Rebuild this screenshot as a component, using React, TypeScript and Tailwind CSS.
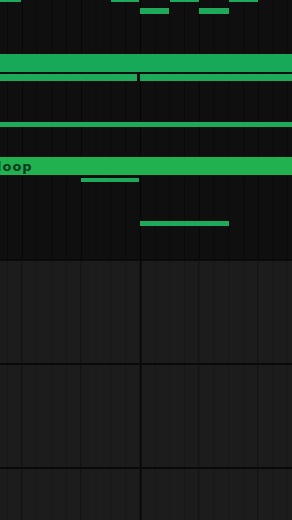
const notes = [
    { x: 0, y: 0, w: 21, h: 2 },
    { x: 111, y: 0, w: 28, h: 2 },
    { x: 170, y: 0, w: 29, h: 2 },
    { x: 229, y: 0, w: 29, h: 2 },
    { x: 140, y: 8, w: 29, h: 6 },
    { x: 199, y: 8, w: 30, h: 6 },
    { x: 0, y: 74, w: 137, h: 7 },
    { x: 140, y: 74, w: 152, h: 7 },
    { x: 81, y: 178, w: 58, h: 4 },
    { x: 140, y: 221, w: 89, h: 5 },
];

const grid =
    "[background-image:linear-gradient(90deg,#050505_1px,transparent_1px),linear-gradient(90deg,#080808_1px,transparent_1px),linear-gradient(90deg,#0a0a0a_1px,transparent_1px)] [background-size:236px_100%,59px_100%,14.75px_100%] [background-position:140px_0,22px_0,7px_0]";

const gridDark =
    "[background-image:linear-gradient(90deg,#0c0c0c_2px,transparent_2px),linear-gradient(90deg,#141414_1px,transparent_1px),linear-gradient(90deg,#181818_1px,transparent_1px)] [background-size:236px_100%,59px_100%,14.75px_100%] [background-position:140px_0,21px_0,7px_0]";

export default function App() {
    return (
        <div className="w-[292px] h-[520px] overflow-hidden bg-[#1c1c1c] flex flex-col font-['DejaVu_Sans',sans-serif]">
            <div className={`relative h-[259px] shrink-0 bg-[#0f0f0f] ${grid}`}>
                {notes.map((n, i) => (
                    <div
                        key={i}
                        className="absolute bg-[#1daa5a]"
                        style={{ left: n.x, top: n.y, width: n.w, height: n.h }}
                    />
                ))}
                <div className="absolute left-0 right-0 top-[54px] h-[18px] bg-[#18a85a]" />
                <div className="absolute left-0 right-0 top-[122px] h-[5px] bg-[#1daa5a]" />
                <div className="absolute left-0 right-0 top-[157px] h-[18px] bg-[#22b14f] flex items-center">
                    <span className="ml-[-3px] text-[13px] font-bold tracking-[1px] text-[#0c3a1f] leading-none">
                        loop
                    </span>
                </div>
            </div>
            {[0, 1, 2].map((r) => (
                <div
                    key={r}
                    className={`h-[104px] shrink-0 border-t-2 border-[#0a0a0a] bg-[#1c1c1c] ${gridDark}`}
                />
            ))}
        </div>
    );
}
